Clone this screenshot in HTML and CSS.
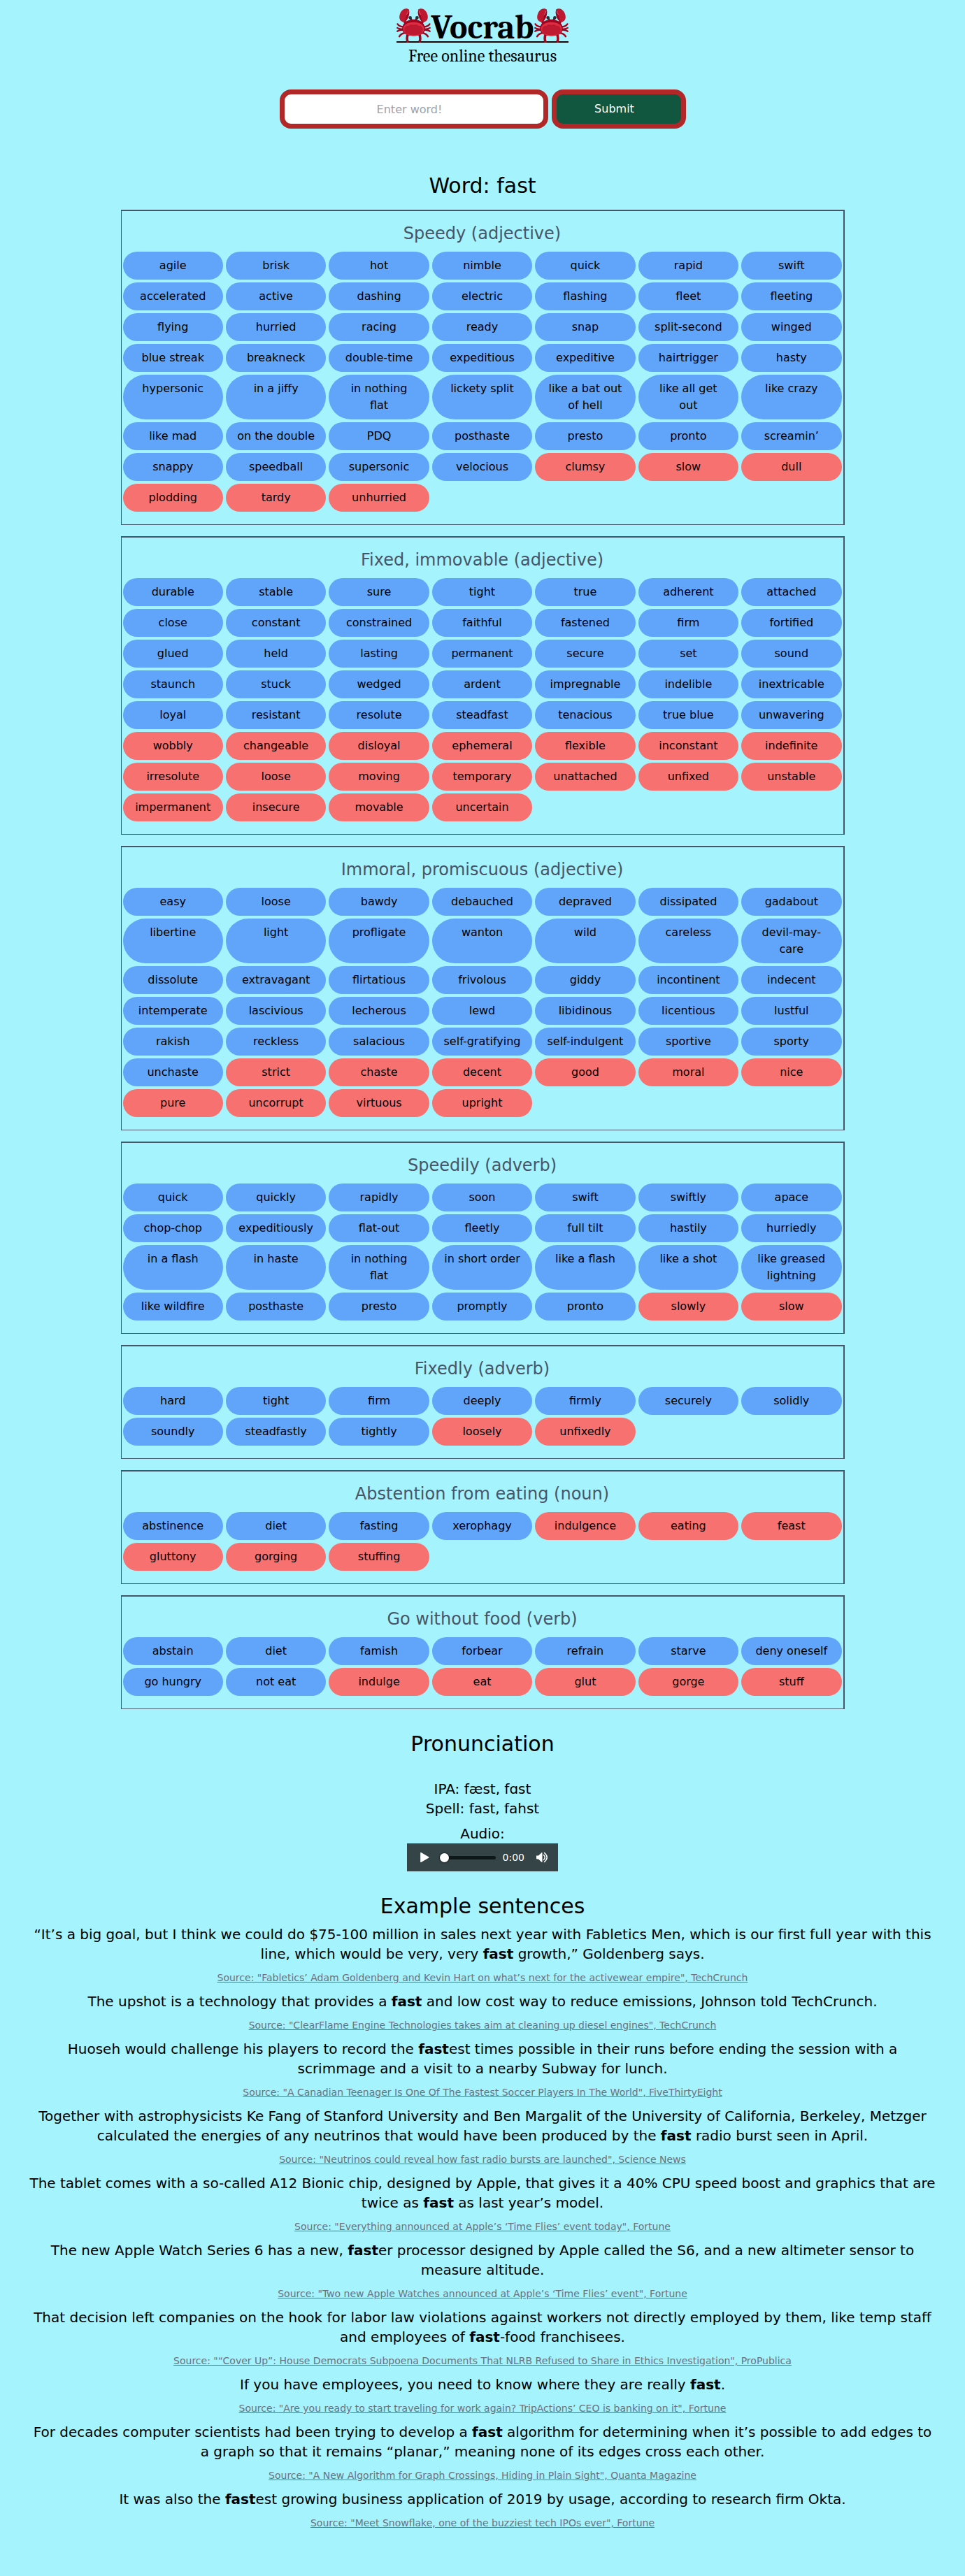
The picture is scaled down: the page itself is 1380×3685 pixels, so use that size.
FILE: index.html
```html
<!DOCTYPE html>
<html lang="en">
<head>
<meta charset="utf-8">
<meta name="viewport" content="width=device-width, initial-scale=1">
<title>Vocrab</title>
<link rel="stylesheet" href="styles.css">
</head>
<body>
<svg width="0" height="0" class="symbols" aria-hidden="true">
<symbol id="crab" viewBox="0 0 36 36">
<g fill="none" stroke="#a0041e" stroke-linecap="round" stroke-linejoin="round">
<path stroke-width="1.800" d="M1.200 16.500Q2.500 19 8 19.500M1 24q2.500-2 7-1.200M3 29.500q1.500-3 6.500-4M34.800 16.500Q33.500 19 28 19.500M35 24q-2.500-2-7-1.200M33 29.500q-1.500-3-6.500-4"/>
<path stroke-width="1.600" d="M.9 20.500q2 1.600 6 1M35.100 20.500q-2 1.600-6 1"/>
<path stroke-width="2.600" d="M11.600 34.600Q10.400 31 12 27M24.400 34.600Q25.600 31 24 27"/>
<path stroke-width="2.600" d="M8.500 12.500Q8.500 16 12 17M27.500 12.500Q27.500 16 24 17"/>
</g>
<path fill="#a0041e" d="M12.500.6Q14.200 3 13 7.500T8.800 14.200L6 12Q7 5 12.500.6zM23.500.6Q21.800 3 23 7.500T27.200 14.200L30 12Q29 5 23.500.6z"/>
<path fill="#be1931" d="M12.900 1.200C10-1.200 5.500 1 3.800 5.500 2.300 9.500 3 13 6.500 14.200 9.300 15 9.500 12 10.200 8.500 10.600 6.200 12.600 4.500 12.900 1.200zM23.100 1.200C26-1.200 30.500 1 32.200 5.500 33.700 9.500 33 13 29.500 14.200 26.700 15 26.500 12 25.800 8.500 25.400 6.200 23.400 4.500 23.100 1.200z"/>
<path fill="none" stroke="#e0b8c6" stroke-width=".4" d="M12.500 2.500Q12.300 4.300 10.600 6.500M23.500 2.500Q23.700 4.300 25.400 6.500"/>
<path fill="none" stroke="#292f33" stroke-width="2" stroke-linecap="round" d="M14.300 9.600l1.400 2.400M21.700 9.600L20.300 12"/>
<circle cx="14.400" cy="9.800" r="1.700" fill="#292f33"/><circle cx="21.600" cy="9.800" r="1.700" fill="#292f33"/>
<path fill="#a0041e" d="M18 11.500C10 11.500 6 16.500 6 21.300 6 26.500 11.500 29 18 29s12-2.500 12-7.700C30 16.500 26 11.500 18 11.500z"/>
<path fill="#dd2e44" d="M18 14.500C11.500 14.500 7 17.500 7 21.500 7 26 12 29 18 29s11-3 11-7.500C29 17.500 24.500 14.500 18 14.500z"/>
<path fill="#be1931" d="M8.500 20.500Q10 17.500 12.500 18.300 15 15.800 18 17.500 21 15.800 23.500 18.300 26 17.500 27.500 20.500 29.500 28 18 28 6.500 28 8.500 20.500z"/>
</symbol>
</svg>
<header class="masthead">
<h1 class="logo"><svg class="crab" aria-hidden="true"><use href="#crab"/></svg><span>Vocrab</span><svg class="crab" aria-hidden="true"><use href="#crab"/></svg></h1>
<p class="tagline">Free online thesaurus</p>
</header>
<form class="search">
<input class="search-input" type="text" placeholder="Enter word!" aria-label="Word">
<button class="search-button" type="submit">Submit</button>
</form>
<main>
<h2 class="heading">Word: fast</h2>
<div class="senses">
<section class="sense">
<h3 class="sense-title">Speedy (adjective)</h3>
<ul class="words">
<li>agile</li><li>brisk</li><li>hot</li><li>nimble</li><li>quick</li><li>rapid</li><li>swift</li>
<li>accelerated</li><li>active</li><li>dashing</li><li>electric</li><li>flashing</li><li>fleet</li><li>fleeting</li>
<li>flying</li><li>hurried</li><li>racing</li><li>ready</li><li>snap</li><li>split-second</li><li>winged</li>
<li>blue streak</li><li>breakneck</li><li>double-time</li><li>expeditious</li><li>expeditive</li><li>hairtrigger</li><li>hasty</li>
<li>hypersonic</li><li>in a jiffy</li><li>in nothing flat</li><li>lickety split</li><li>like a bat out of hell</li><li>like all get out</li><li>like crazy</li>
<li>like mad</li><li>on the double</li><li>PDQ</li><li>posthaste</li><li>presto</li><li>pronto</li><li>screamin’</li>
<li>snappy</li><li>speedball</li><li>supersonic</li><li>velocious</li><li class="antonym">clumsy</li><li class="antonym">slow</li><li class="antonym">dull</li>
<li class="antonym">plodding</li><li class="antonym">tardy</li><li class="antonym">unhurried</li>
</ul>
</section>
<section class="sense">
<h3 class="sense-title">Fixed, immovable (adjective)</h3>
<ul class="words">
<li>durable</li><li>stable</li><li>sure</li><li>tight</li><li>true</li><li>adherent</li><li>attached</li>
<li>close</li><li>constant</li><li>constrained</li><li>faithful</li><li>fastened</li><li>firm</li><li>fortified</li>
<li>glued</li><li>held</li><li>lasting</li><li>permanent</li><li>secure</li><li>set</li><li>sound</li>
<li>staunch</li><li>stuck</li><li>wedged</li><li>ardent</li><li>impregnable</li><li>indelible</li><li>inextricable</li>
<li>loyal</li><li>resistant</li><li>resolute</li><li>steadfast</li><li>tenacious</li><li>true blue</li><li>unwavering</li>
<li class="antonym">wobbly</li><li class="antonym">changeable</li><li class="antonym">disloyal</li><li class="antonym">ephemeral</li><li class="antonym">flexible</li><li class="antonym">inconstant</li><li class="antonym">indefinite</li>
<li class="antonym">irresolute</li><li class="antonym">loose</li><li class="antonym">moving</li><li class="antonym">temporary</li><li class="antonym">unattached</li><li class="antonym">unfixed</li><li class="antonym">unstable</li>
<li class="antonym">impermanent</li><li class="antonym">insecure</li><li class="antonym">movable</li><li class="antonym">uncertain</li>
</ul>
</section>
<section class="sense">
<h3 class="sense-title">Immoral, promiscuous (adjective)</h3>
<ul class="words">
<li>easy</li><li>loose</li><li>bawdy</li><li>debauched</li><li>depraved</li><li>dissipated</li><li>gadabout</li>
<li>libertine</li><li>light</li><li>profligate</li><li>wanton</li><li>wild</li><li>careless</li><li>devil-may-care</li>
<li>dissolute</li><li>extravagant</li><li>flirtatious</li><li>frivolous</li><li>giddy</li><li>incontinent</li><li>indecent</li>
<li>intemperate</li><li>lascivious</li><li>lecherous</li><li>lewd</li><li>libidinous</li><li>licentious</li><li>lustful</li>
<li>rakish</li><li>reckless</li><li>salacious</li><li>self-gratifying</li><li>self-indulgent</li><li>sportive</li><li>sporty</li>
<li>unchaste</li><li class="antonym">strict</li><li class="antonym">chaste</li><li class="antonym">decent</li><li class="antonym">good</li><li class="antonym">moral</li><li class="antonym">nice</li>
<li class="antonym">pure</li><li class="antonym">uncorrupt</li><li class="antonym">virtuous</li><li class="antonym">upright</li>
</ul>
</section>
<section class="sense">
<h3 class="sense-title">Speedily (adverb)</h3>
<ul class="words">
<li>quick</li><li>quickly</li><li>rapidly</li><li>soon</li><li>swift</li><li>swiftly</li><li>apace</li>
<li>chop-chop</li><li>expeditiously</li><li>flat-out</li><li>fleetly</li><li>full tilt</li><li>hastily</li><li>hurriedly</li>
<li>in a flash</li><li>in haste</li><li>in nothing flat</li><li>in short order</li><li>like a flash</li><li>like a shot</li><li>like greased lightning</li>
<li>like wildfire</li><li>posthaste</li><li>presto</li><li>promptly</li><li>pronto</li><li class="antonym">slowly</li><li class="antonym">slow</li>
</ul>
</section>
<section class="sense">
<h3 class="sense-title">Fixedly (adverb)</h3>
<ul class="words">
<li>hard</li><li>tight</li><li>firm</li><li>deeply</li><li>firmly</li><li>securely</li><li>solidly</li>
<li>soundly</li><li>steadfastly</li><li>tightly</li><li class="antonym">loosely</li><li class="antonym">unfixedly</li>
</ul>
</section>
<section class="sense">
<h3 class="sense-title">Abstention from eating (noun)</h3>
<ul class="words">
<li>abstinence</li><li>diet</li><li>fasting</li><li>xerophagy</li><li class="antonym">indulgence</li><li class="antonym">eating</li><li class="antonym">feast</li>
<li class="antonym">gluttony</li><li class="antonym">gorging</li><li class="antonym">stuffing</li>
</ul>
</section>
<section class="sense">
<h3 class="sense-title">Go without food (verb)</h3>
<ul class="words">
<li>abstain</li><li>diet</li><li>famish</li><li>forbear</li><li>refrain</li><li>starve</li><li>deny oneself</li>
<li>go hungry</li><li>not eat</li><li class="antonym">indulge</li><li class="antonym">eat</li><li class="antonym">glut</li><li class="antonym">gorge</li><li class="antonym">stuff</li>
</ul>
</section>
</div>
<section class="pronunciation">
<h2 class="heading">Pronunciation</h2>
<div class="readings">
<p>IPA: fæst, fɑst</p>
<p>Spell: fast, fahst</p>
</div>
<p class="audio-label">Audio:</p>
<div class="player">
<button class="player-button" type="button" aria-label="Play"><svg width="14" height="16" viewBox="0 0 14 16"><path d="M1.200 1.600v12.800q0 1 1 .5L13 8.700q.9-.7 0-1.400L2.200 1.100q-1-.5-1 .5z" fill="#fff"/></svg></button>
<input class="player-seek" type="range" min="0" max="100" value="0" aria-label="Position">
<span class="player-time">0:00</span>
<button class="player-button" type="button" aria-label="Mute"><svg width="18" height="16" viewBox="0 0 18 16"><path d="M1 5.500h3L8.500 1.200q1-.7 1 .3v13q0 1-1 .3L4 10.500H2q-1 0-1-1z" fill="#fff"/><path d="M11.500 4.500q3.500 3.500 0 7M12.500 1.500q7.500 6.500 0 13" fill="none" stroke="#fff" stroke-width="1.500" stroke-linecap="round"/></svg></button>
</div>
</section>
<section class="examples">
<h2 class="heading">Example sentences</h2>
<ul class="sentences">
<li><p>“It’s a big goal, but I think we could do $75-100 million in sales next year with Fabletics Men, which is our first full year with this line, which would be very, very <strong>fast</strong> growth,” Goldenberg says.</p>
<p class="source"><a href="#">Source: "Fabletics’ Adam Goldenberg and Kevin Hart on what’s next for the activewear empire", TechCrunch</a></p></li>
<li><p>The upshot is a technology that provides a <strong>fast</strong> and low cost way to reduce emissions, Johnson told TechCrunch.</p>
<p class="source"><a href="#">Source: "ClearFlame Engine Technologies takes aim at cleaning up diesel engines", TechCrunch</a></p></li>
<li><p>Huoseh would challenge his players to record the <strong>fast</strong>est times possible in their runs before ending the session with a scrimmage and a visit to a nearby Subway for lunch.</p>
<p class="source"><a href="#">Source: "A Canadian Teenager Is One Of The Fastest Soccer Players In The World", FiveThirtyEight</a></p></li>
<li><p>Together with astrophysicists Ke Fang of Stanford University and Ben Margalit of the University of California, Berkeley, Metzger calculated the energies of any neutrinos that would have been produced by the <strong>fast</strong> radio burst seen in April.</p>
<p class="source"><a href="#">Source: "Neutrinos could reveal how fast radio bursts are launched", Science News</a></p></li>
<li><p>The tablet comes with a so-called A12 Bionic chip, designed by Apple, that gives it a 40% CPU speed boost and graphics that are twice as <strong>fast</strong> as last year’s model.</p>
<p class="source"><a href="#">Source: "Everything announced at Apple’s ‘Time Flies’ event today", Fortune</a></p></li>
<li><p>The new Apple Watch Series 6 has a new, <strong>fast</strong>er processor designed by Apple called the S6, and a new altimeter sensor to measure altitude.</p>
<p class="source"><a href="#">Source: "Two new Apple Watches announced at Apple’s ‘Time Flies’ event", Fortune</a></p></li>
<li><p>That decision left companies on the hook for labor law violations against workers not directly employed by them, like temp staff and employees of <strong>fast</strong>-food franchisees.</p>
<p class="source"><a href="#">Source: "“Cover Up”: House Democrats Subpoena Documents That NLRB Refused to Share in Ethics Investigation", ProPublica</a></p></li>
<li><p>If you have employees, you need to know where they are really <strong>fast</strong>.</p>
<p class="source"><a href="#">Source: "Are you ready to start traveling for work again? TripActions’ CEO is banking on it", Fortune</a></p></li>
<li><p>For decades computer scientists had been trying to develop a <strong>fast</strong> algorithm for determining when it’s possible to add edges to a graph so that it remains “planar,” meaning none of its edges cross each other.</p>
<p class="source"><a href="#">Source: "A New Algorithm for Graph Crossings, Hiding in Plain Sight", Quanta Magazine</a></p></li>
<li><p>It was also the <strong>fast</strong>est growing business application of 2019 by usage, according to research firm Okta.</p>
<p class="source"><a href="#">Source: "Meet Snowflake, one of the buzziest tech IPOs ever", Fortune</a></p></li>
</ul>
</section>
</main>
</body>
</html>
```
FILE: styles.css
```css
*, *::before, *::after { box-sizing: border-box; }

body {
  margin: 0;
  padding-bottom: 56px;
  background: #a5f3fc;
  color: #000;
  font-family: "DejaVu Sans", sans-serif;
  font-size: 16px;
  line-height: 24px;
  text-align: center;
}

h1, h2, h3, p, ul { margin: 0; padding: 0; font-weight: 400; }
ul { list-style: none; }
.symbols { display: none; }

.masthead {
  display: flex;
  flex-direction: column;
  align-items: center;
  gap: 3px;
  padding-top: 12px;
  font-family: Cambria, Caladea, "Liberation Serif", serif;
}

.logo {
  display: flex;
  align-items: flex-end;
  border-bottom: 2px solid #000;
  font-size: 48px;
  line-height: 38px;
  font-weight: 700;
}

/* The feet stand on the rule under the name. */
.crab {
  width: 49px;
  height: 49px;
  margin-bottom: -2px;
}

.tagline { font-size: 24px; line-height: 32px; }

.search {
  display: flex;
  justify-content: center;
  gap: 5px;
  padding: 32px 0 64px;
}

.search-input, .search-button {
  height: 56px;
  padding: 8px 20px 8px 8px;
  border: 7px solid #b22828;
  border-radius: 16px;
  font: inherit;
  text-align: center;
}

.search-input { width: 384px; background: #fff; }
.search-input::placeholder { color: #9ca3af; opacity: 1; }
.search-button { width: 192px; background: #11573f; color: #fff; }

.heading { font-size: 30px; line-height: 36px; }

.senses {
  display: grid;
  gap: 16px;
  width: 75%;
  margin: 16px auto 0;
}

.sense {
  padding: 16px 0;
  border: 1px solid #475569;
  border-top-width: 2px;
  border-right-width: 2px;
}

.sense-title {
  margin-bottom: 8px;
  color: #475569;
  font-size: 24px;
  line-height: 32px;
}

.words {
  display: grid;
  grid-template-columns: repeat(7, 1fr);
  gap: 4px;
  padding: 2px;
}

.words li {
  padding: 8px 16px;
  border-radius: 9999px;
  background: #60a5fa;
}

.words .antonym { background: #f87171; }

.pronunciation {
  padding: 32px 0;
  font-size: 20px;
  line-height: 28px;
}

.readings { padding-top: 32px; }
.audio-label { padding-top: 8px; }

.player {
  display: flex;
  align-items: center;
  width: 216px;
  height: 40px;
  margin: 0 auto;
  padding: 0 14px 0 18px;
  background: #354447;
}

.player-button {
  display: flex;
  padding: 0;
  border: 0;
  background: none;
}

.player-seek {
  flex: 1;
  min-width: 0;
  height: 14px;
  margin: 0 10px 0 15px;
  appearance: none;
  background: none;
}

.player-seek::-webkit-slider-runnable-track {
  height: 5px;
  border-radius: 3px;
  background: #101718;
}

.player-seek::-webkit-slider-thumb {
  width: 13px;
  height: 13px;
  margin-top: -4px;
  appearance: none;
  border-radius: 50%;
  background: #fff;
  box-shadow: 0 0 3px #000;
}

.player-time {
  margin-right: 16px;
  color: #fff;
  font-size: 14px;
  line-height: 20px;
}

.sentences {
  padding: 8px 40px 0;
  font-size: 20px;
  line-height: 28px;
}

.source { padding: 8px; font-size: 16px; line-height: 24px; }

.source a {
  color: #6b7280;
  font-size: 14px;
  line-height: 20px;
}
```
